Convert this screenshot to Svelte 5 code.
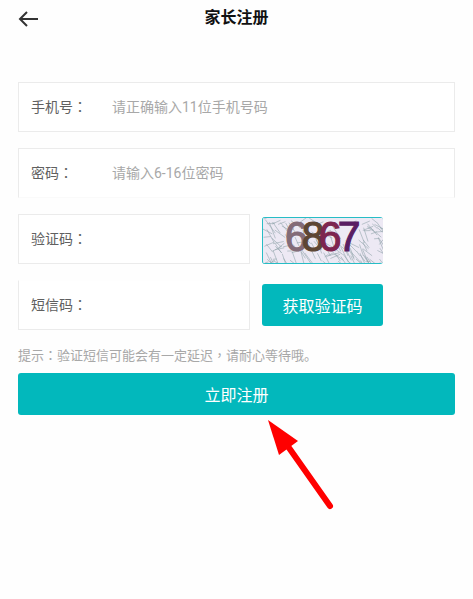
<!-- Register.svelte -->

<script>
  let phone = '';
  let password = '';
  let captcha = '';
  let smsCode = '';

  // Digits of the captcha picture
  const digits = [
    { char: '6', x: 22, color: '#836b78' },
    { char: '8', x: 39, color: '#5d4634' },
    { char: '6', x: 56, color: '#7d2550' },
    { char: '7', x: 75, color: '#591d63' }
  ];

  // Noise strokes behind the digits
  function makeNoise(count) {
    let seed = 17;
    const next = () => {
      seed = (seed * 16807) % 2147483647;
      return seed / 2147483647;
    };
    const lines = [];
    for (let i = 0; i < count; i++) {
      const x = next() * 122;
      const y = next() * 46;
      const down = next() > 0.3;
      lines.push({
        x1: x,
        y1: y,
        x2: x + 3 + next() * 8,
        y2: down ? y + 4 + next() * 12 : y - next() * 5
      });
    }
    return lines;
  }

  const noise = makeNoise(150);
</script>

<div class="page">
  <header class="header">
    <button class="back" type="button" aria-label="返回">
      <svg width="22" height="18" viewBox="0 0 22 18">
        <path d="M20 9H2M9 2L2 9L9 16" />
      </svg>
    </button>
    <h1>家长注册</h1>
  </header>

  <form class="form" on:submit|preventDefault>
    <div class="field">
      <label for="phone">手机号<span class="mark">：</span></label>
      <input id="phone" type="tel" placeholder="请正确输入11位手机号码" bind:value={phone} />
    </div>
    <div class="field open-bottom">
      <label for="password">密码<span class="mark">：</span></label>
      <input id="password" type="password" placeholder="请输入6-16位密码" bind:value={password} />
    </div>
    <div class="row">
      <div class="field">
        <label for="captcha">验证码<span class="mark">：</span></label>
        <input id="captcha" type="text" bind:value={captcha} />
      </div>
      <button class="captcha" type="button">
        <svg viewBox="0 0 120 44" preserveAspectRatio="none">
          {#each noise as line}
            <line x1={line.x1} y1={line.y1} x2={line.x2} y2={line.y2} />
          {/each}
          {#each digits as digit}
            <text x={digit.x} y="32" fill={digit.color} stroke={digit.color}>{digit.char}</text>
          {/each}
        </svg>
      </button>
    </div>
    <div class="row">
      <div class="field open-top">
        <label for="sms">短信码<span class="mark">：</span></label>
        <input id="sms" type="text" bind:value={smsCode} />
      </div>
      <button class="button" type="button">获取验证码</button>
    </div>
    <div class="bottom">
      <p class="hint">提示<span class="mark">：</span>验证短信可能会有一定延迟<span class="mark">，</span>请耐心等待哦。</p>
      <button class="button submit" type="submit">立即注册</button>
      <svg class="pointer" width="68" height="92" viewBox="0 0 68 92">
        <path class="shaft" d="M20 26L63 87" />
        <path class="head" d="M1 1L31 22L12 36Z" />
      </svg>
    </div>
  </form>
</div>

<style>
  :global(body) {
    background: #fefefe;
  }
  .page {
    min-height: 100vh;
    font-family: Roboto, 'Noto Sans CJK SC', sans-serif;
    color: #606060;
  }
  .header {
    display: grid;
    grid-template-columns: 40px 1fr 40px;
    align-items: center;
    height: 36px;
    padding: 0 18px;
  }
  .back {
    display: flex;
    padding: 2px 0 0;
    border: 0;
    background: none;
  }
  .back path {
    fill: none;
    stroke: #333;
    stroke-width: 2;
  }
  h1 {
    margin: 0;
    font-size: 16px;
    line-height: 24px;
    font-weight: 700;
    text-align: center;
    color: #111;
  }
  .form {
    display: flex;
    flex-direction: column;
    gap: 16px;
    padding: 46px 18px 0;
  }
  .field {
    display: flex;
    align-items: center;
    box-sizing: border-box;
    height: 50px;
    min-width: 0;
    padding: 0 12px;
    border: 1px solid #ebebeb;
    background: #fff;
    font-size: 14px;
  }
  .open-bottom {
    border-bottom-color: #fafafa;
  }
  .open-top {
    border-top-color: #fefefe;
  }
  label {
    flex: 0 0 81px;
    padding-bottom: 2px;
    line-height: 20px;
  }
  .mark {
    font-family: 'Noto Sans CJK TC', sans-serif;
  }
  input {
    flex: 1;
    min-width: 0;
    padding: 0;
    border: 0;
    outline: 0;
    background: none;
    font: inherit;
    color: #333;
  }
  input::placeholder {
    color: #a8a8a8;
    opacity: 1;
  }
  .row {
    display: grid;
    grid-template-columns: 27fr 14fr 7fr;
    gap: 12px;
    align-items: center;
  }
  .captcha {
    align-self: end;
    height: 47px;
    padding: 1px 0;
    border: 0;
    border-left: 1px solid #27bdc6;
    border-radius: 3px;
    background: #27bdc6;
    overflow: hidden;
  }
  .captcha svg {
    display: block;
    width: 100%;
    height: 45px;
    background: #ede9f4;
  }
  .captcha line {
    stroke: #94a6ae;
    stroke-width: 0.6;
  }
  .captcha text {
    font-family: 'Liberation Sans', sans-serif;
    font-size: 41px;
    stroke-width: 1.2;
  }
  .button {
    height: 42px;
    padding: 0 0 1px;
    border: 0;
    border-radius: 3px;
    background: #02b8bc;
    font-family: inherit;
    font-size: 16px;
    color: #fff;
  }
  .bottom {
    position: relative;
    display: flex;
    flex-direction: column;
    gap: 8px;
  }
  .hint {
    margin: 0;
    font-size: 13px;
    line-height: 18px;
    color: #a8a8a8;
  }
  .submit {
    width: 100%;
  }
  /* red arrow pointing at the submit button */
  .pointer {
    position: absolute;
    top: 100%;
    left: 57%;
    margin-top: 4px;
  }
  .shaft {
    fill: none;
    stroke: #f00;
    stroke-width: 6;
    stroke-linecap: round;
  }
  .head {
    fill: #f00;
  }
</style>
